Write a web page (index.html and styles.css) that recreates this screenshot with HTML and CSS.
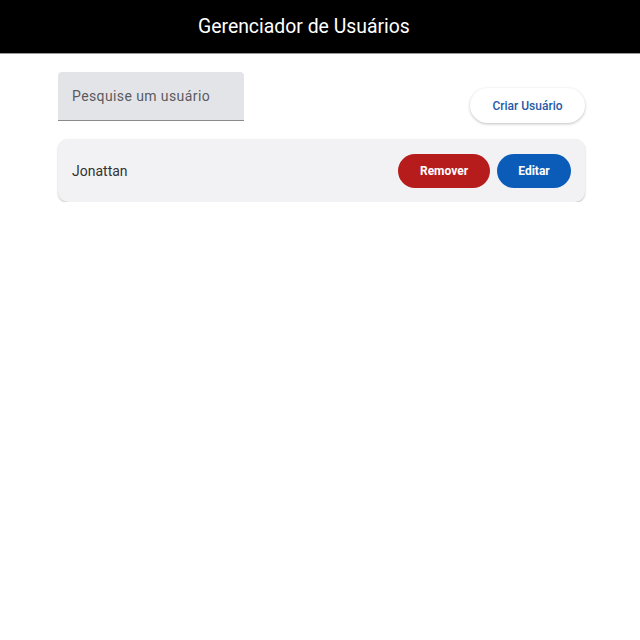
FILE: index.html
```html
<!DOCTYPE html>
<html lang="pt-BR">

<head>
    <meta charset="UTF-8">
    <meta name="viewport" content="width=device-width, initial-scale=1.0">
    <title>Gerenciador de Usuários</title>
    <link rel="stylesheet" href="styles.css">
</head>

<body>
    <header class="topbar">
        <h1>Gerenciador de Usuários</h1>
    </header>

    <main class="container">
        <div class="toolbar">
            <input type="text" class="search" placeholder="Pesquise um usuário">
            <button type="button" class="btn-create">Criar Usuário</button>
        </div>

        <div class="user-card">
            <span class="user-name">Jonattan</span>
            <div class="actions">
                <button type="button" class="btn btn-remove">Remover</button>
                <button type="button" class="btn btn-edit">Editar</button>
            </div>
        </div>
    </main>
</body>

</html>
```

FILE: styles.css
```css
body {
    font-family: Roboto, "Liberation Sans", sans-serif;
    background-color: #fff;
    margin: 0;
    padding: 0;
}

.topbar {
    background-color: #000;
    height: 53px;
    border-bottom: 1px solid #9a9a9a;
    display: flex;
    align-items: center;
    padding-left: 198px;
}

.topbar h1 {
    margin: 0;
    color: #fff;
    font-size: 19.4px;
    font-weight: 400;
}

.container {
    width: 527px;
    margin: 18px 0 0 58px;
}

.toolbar {
    display: flex;
    justify-content: space-between;
    align-items: flex-end;
}

.search {
    width: 186px;
    height: 49px;
    box-sizing: border-box;
    padding: 0 14px;
    border: none;
    border-bottom: 1px solid #8a8a8a;
    border-radius: 4px 4px 0 0;
    background-color: #e3e4e8;
    font-family: Roboto, sans-serif;
    font-size: 14px;
    letter-spacing: 0.4px;
    color: #333;
}

.search::placeholder {
    color: #5a5a5f;
}

.btn-create {
    height: 35px;
    width: 115px;
    margin-bottom: -2px;
    border: none;
    border-radius: 18px;
    background-color: #fff;
    color: #1f5aa6;
    font-family: Roboto, sans-serif;
    font-size: 12px;
    font-weight: 500;
    box-shadow: 0 1px 3px rgba(0, 0, 0, 0.25);
    cursor: pointer;
}

/* User list */
.user-card {
    margin-top: 18px;
    height: 63px;
    box-sizing: border-box;
    padding: 0 14px;
    display: flex;
    align-items: center;
    justify-content: space-between;
    background-color: #f2f2f4;
    border-radius: 10px;
    box-shadow: 0 1px 2px rgba(0, 0, 0, 0.25);
}

.user-name {
    font-size: 14px;
    color: #333;
}

.actions {
    display: flex;
    gap: 7px;
}

.btn {
    height: 34px;
    border: none;
    border-radius: 17px;
    color: #fff;
    font-family: Roboto, sans-serif;
    font-size: 12px;
    font-weight: 700;
    cursor: pointer;
}

.btn-remove {
    width: 92px;
    background-color: #b71c1c;
}

.btn-edit {
    width: 74px;
    background-color: #0b5cb8;
}
```
